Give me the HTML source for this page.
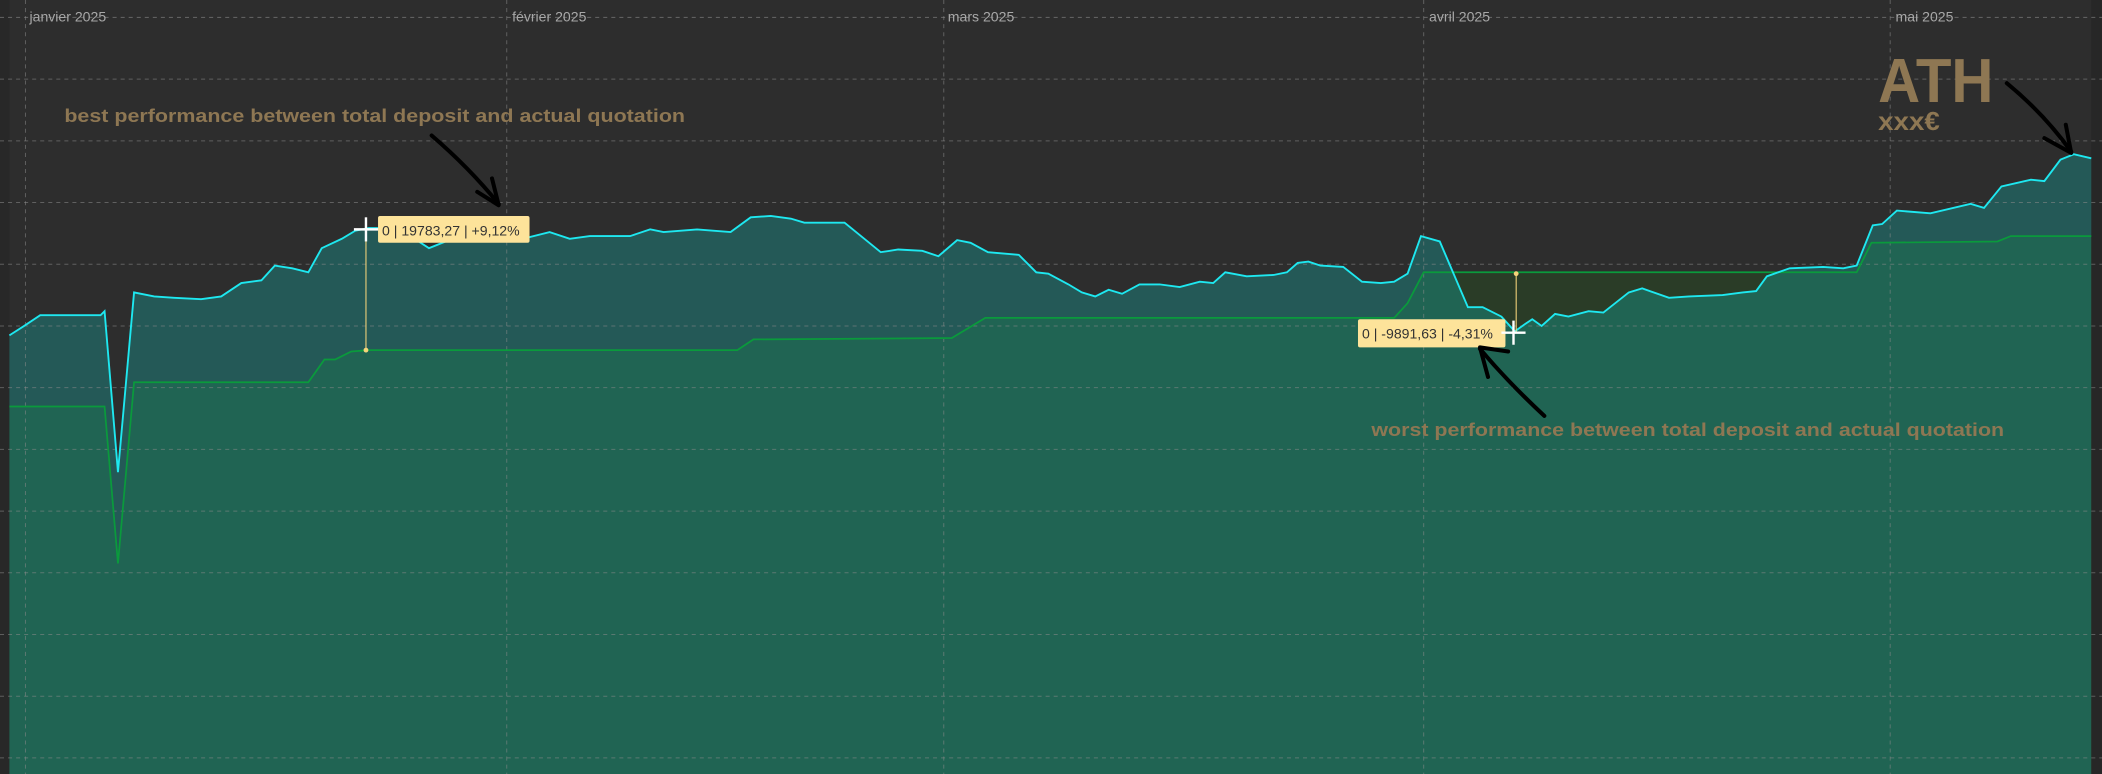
<!DOCTYPE html>
<html><head><meta charset="utf-8"><style>
html,body{margin:0;padding:0;background:#2d2d2d;overflow:hidden}
svg{display:block}
</style></head><body>
<svg width="2102" height="774" viewBox="0 0 1568 577" preserveAspectRatio="none" xmlns="http://www.w3.org/2000/svg">
<defs>
<clipPath id="cy"><polygon id="cyp" points="7,577 7,250 18,243 30,235 75,235 78,232 88,352 100,218 115,221 130,222 150,223 165,221 180,211 195,209 205,198 218,200 230,203 240,185 255,178 265,172 275,170 290,170 300,172 320,185 335,179 345,175 375,174 390,178 410,173 425,178 440,176 470,176 485,171 495,173 520,171 545,173 560,162 575,161 590,163 600,166 630,166 657,188 670,186 688,187 700,191 714,179 724,181 737,188 760,190 773,203 782,204 797,212 807,218 817,221 827,216 837,219 850,212 865,212 880,214 895,210 905,211 914,203 930,206 950,205 960,203 968,196 976,195 985,198 1002,199 1016,210 1030,211 1040,210 1050,204 1060,176 1074,180 1095,229 1106,229 1120,236 1130,247 1137,242 1143,238 1150,243 1160,234 1170,236 1185,232 1196,233 1215,218 1225,215 1245,222 1260,221 1285,220 1300,218 1310,217 1318,206 1335,200 1360,199 1375,200 1385,198 1397,168 1404,167 1415,157 1440,159 1470,152 1480,155 1493,139 1515,134 1525,135 1537,119 1547,115 1560,118 1560,577"/></clipPath>
</defs>
<rect width="1568" height="577" fill="#2d2d2d"/>
<rect x="0" y="0" width="7" height="577" fill="#282828"/>
<rect x="1560" y="0" width="8" height="577" fill="#272727"/>
<!-- fills -->
<polygon points="7,577 7,250 18,243 30,235 75,235 78,232 88,352 100,218 115,221 130,222 150,223 165,221 180,211 195,209 205,198 218,200 230,203 240,185 255,178 265,172 275,170 290,170 300,172 320,185 335,179 345,175 375,174 390,178 410,173 425,178 440,176 470,176 485,171 495,173 520,171 545,173 560,162 575,161 590,163 600,166 630,166 657,188 670,186 688,187 700,191 714,179 724,181 737,188 760,190 773,203 782,204 797,212 807,218 817,221 827,216 837,219 850,212 865,212 880,214 895,210 905,211 914,203 930,206 950,205 960,203 968,196 976,195 985,198 1002,199 1016,210 1030,211 1040,210 1050,204 1060,176 1074,180 1095,229 1106,229 1120,236 1130,247 1137,242 1143,238 1150,243 1160,234 1170,236 1185,232 1196,233 1215,218 1225,215 1245,222 1260,221 1285,220 1300,218 1310,217 1318,206 1335,200 1360,199 1375,200 1385,198 1397,168 1404,167 1415,157 1440,159 1470,152 1480,155 1493,139 1515,134 1525,135 1537,119 1547,115 1560,118 1560,577" fill="#245957"/>
<polygon id="gp" points="7,577 7,303 78,303 88,420 100,285 230,285 242,268 250,268 262,262 275,261 550,261 562,253 710,252 735,237 1040,237 1050,226 1062,203 1385,203 1396,181 1490,180 1500,176 1560,176 1560,577" fill="#2a3c27"/>
<polygon points="7,577 7,303 78,303 88,420 100,285 230,285 242,268 250,268 262,262 275,261 550,261 562,253 710,252 735,237 1040,237 1050,226 1062,203 1385,203 1396,181 1490,180 1500,176 1560,176 1560,577" fill="#206453" clip-path="url(#cy)"/>
<!-- grid -->
<g stroke="#8a8a8a" stroke-opacity="0.55" stroke-width="0.75" stroke-dasharray="3,3" fill="none">
<line x1="0" y1="13" x2="1568" y2="13"/><line x1="0" y1="59" x2="1568" y2="59"/><line x1="0" y1="105" x2="1568" y2="105"/><line x1="0" y1="151" x2="1568" y2="151"/><line x1="0" y1="197" x2="1568" y2="197"/><line x1="0" y1="243" x2="1568" y2="243"/><line x1="0" y1="289" x2="1568" y2="289"/><line x1="0" y1="335" x2="1568" y2="335"/><line x1="0" y1="381" x2="1568" y2="381"/><line x1="0" y1="427" x2="1568" y2="427"/><line x1="0" y1="473" x2="1568" y2="473"/><line x1="0" y1="519" x2="1568" y2="519"/><line x1="0" y1="565" x2="1568" y2="565"/>
<line x1="19" y1="0" x2="19" y2="577"/><line x1="378" y1="0" x2="378" y2="577"/><line x1="704" y1="0" x2="704" y2="577"/><line x1="1062" y1="0" x2="1062" y2="577"/><line x1="1410" y1="0" x2="1410" y2="577"/>
</g>
<g font-family="Liberation Sans, sans-serif" font-size="10.5" fill="#a8a8a8">
<text x="22" y="16">janvier 2025</text><text x="382" y="16">février 2025</text><text x="707" y="16">mars 2025</text><text x="1066" y="16">avril 2025</text><text x="1414" y="16">mai 2025</text>
</g>
<!-- lines -->
<polyline fill="none" stroke="#0a9a3c" stroke-width="1.3" points="7,303 78,303 88,420 100,285 230,285 242,268 250,268 262,262 275,261 550,261 562,253 710,252 735,237 1040,237 1050,226 1062,203 1385,203 1396,181 1490,180 1500,176 1560,176"/>
<polyline fill="none" stroke="#1ee8f0" stroke-width="1.4" points="7,250 18,243 30,235 75,235 78,232 88,352 100,218 115,221 130,222 150,223 165,221 180,211 195,209 205,198 218,200 230,203 240,185 255,178 265,172 275,170 290,170 300,172 320,185 335,179 345,175 375,174 390,178 410,173 425,178 440,176 470,176 485,171 495,173 520,171 545,173 560,162 575,161 590,163 600,166 630,166 657,188 670,186 688,187 700,191 714,179 724,181 737,188 760,190 773,203 782,204 797,212 807,218 817,221 827,216 837,219 850,212 865,212 880,214 895,210 905,211 914,203 930,206 950,205 960,203 968,196 976,195 985,198 1002,199 1016,210 1030,211 1040,210 1050,204 1060,176 1074,180 1095,229 1106,229 1120,236 1130,247 1137,242 1143,238 1150,243 1160,234 1170,236 1185,232 1196,233 1215,218 1225,215 1245,222 1260,221 1285,220 1300,218 1310,217 1318,206 1335,200 1360,199 1375,200 1385,198 1397,168 1404,167 1415,157 1440,159 1470,152 1480,155 1493,139 1515,134 1525,135 1537,119 1547,115 1560,118"/>
<!-- markers -->
<line x1="273" y1="171" x2="273" y2="261" stroke="#f5d47a" stroke-width="0.8"/><circle cx="273" cy="261" r="1.8" fill="#f5d47a"/>
<line x1="1131" y1="204" x2="1131" y2="248" stroke="#f5d47a" stroke-width="0.8"/><circle cx="1131" cy="204" r="1.8" fill="#f5d47a"/>
<rect x="282" y="161" width="113" height="20" rx="1.5" fill="#fde39a"/>
<text x="285" y="175.5" font-family="Liberation Sans, sans-serif" font-size="10.5" fill="#333">0 | 19783,27 | +9,12%</text>
<rect x="1013" y="238" width="110" height="21" rx="1.5" fill="#fde39a"/>
<text x="1016" y="252.5" font-family="Liberation Sans, sans-serif" font-size="10.5" fill="#333">0 | -9891,63 | -4,31%</text>
<g stroke="#fff" stroke-width="1.8"><line x1="264" y1="171" x2="282" y2="171"/><line x1="273" y1="162" x2="273" y2="180"/><line x1="1120" y1="248" x2="1138" y2="248"/><line x1="1129" y1="239" x2="1129" y2="257"/></g>
<!-- annotations -->
<g font-family="Liberation Sans, sans-serif" font-weight="bold" fill="#8e7753">
<text x="48" y="91" font-size="14" textLength="463" lengthAdjust="spacingAndGlyphs">best performance between total deposit and actual quotation</text>
<text x="1023" y="325" font-size="14" textLength="472" lengthAdjust="spacingAndGlyphs">worst performance between total deposit and actual quotation</text>
<text x="1401" y="76" font-size="46" textLength="86" lengthAdjust="spacingAndGlyphs">ATH</text>
<text x="1401" y="97" font-size="19" textLength="46" lengthAdjust="spacingAndGlyphs">xxx€</text>
</g>
<g fill="none" stroke="#000" stroke-width="3" stroke-linecap="round" stroke-linejoin="round">
<path d="M322,101 Q350,125 372,152"/><path d="M356,143 L372,153 L367,133"/>
<path d="M1497,62 Q1525,85 1545,113"/><path d="M1525,103 L1545,114 L1541,93"/>
<path d="M1152,310 Q1125,285 1104,260"/><path d="M1125,262 L1104,259 L1110,281"/>
</g>
</svg>
</body></html>
